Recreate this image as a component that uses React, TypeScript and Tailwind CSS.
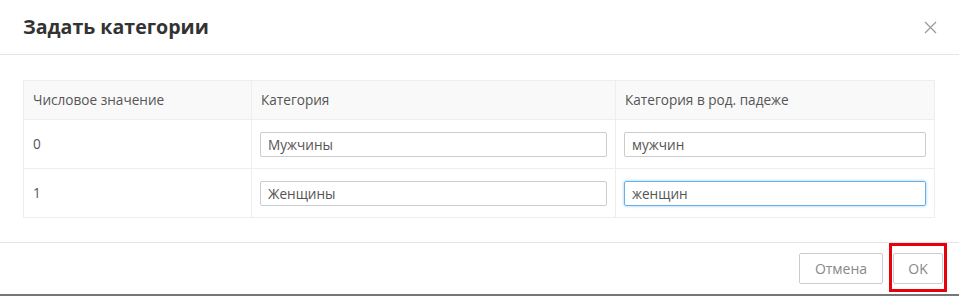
import { useState } from 'react';

const rows = [
  { value: '0', category: 'Мужчины', genitive: 'мужчин' },
  { value: '1', category: 'Женщины', genitive: 'женщин' },
];

function App() {
  const [data, setData] = useState(rows);

  const update = (index: number, key: 'category' | 'genitive', text: string) => {
    setData((prev) => prev.map((row, i) => (i === index ? { ...row, [key]: text } : row)));
  };

  return (
    <div className="h-[296px] w-[959px] overflow-hidden bg-white font-['Open_Sans',sans-serif] text-[#333]">
      <div className="flex h-[294px] flex-col">
        <header className="flex h-[55px] items-center justify-between border-b border-[#e5e5e5] pl-[23px] pr-[22px]">
          <h1 className="text-[19.6px] font-bold leading-none text-[#333]">Задать категории</h1>
          <button className="text-[#999]">
            <svg width="13" height="13" viewBox="0 0 13 13" fill="none" stroke="currentColor" strokeWidth="1.2">
              <path d="M1 1L12 12M12 1L1 12" />
            </svg>
          </button>
        </header>

        <section className="px-[23px] pb-[24px] pt-[25px]">
          <table className="w-[912px] table-fixed border-collapse border border-[#eee] text-[13.6px] text-[#555]">
            <colgroup>
              <col className="w-[228px]" />
              <col className="w-[364px]" />
              <col />
            </colgroup>
            <thead>
              <tr className="h-[39px] bg-[#f9f9f9]">
                <th className="border border-[#eee] px-[9px] text-left font-normal">Числовое значение</th>
                <th className="border border-[#eee] px-[9px] text-left font-normal">Категория</th>
                <th className="border border-[#eee] px-[9px] text-left font-normal">Категория в род. падеже</th>
              </tr>
            </thead>
            <tbody>
              {data.map((row, i) => (
                <tr key={row.value} className="h-[49px]">
                  <td className="border border-[#eee] px-[9px]">{row.value}</td>
                  <td className="border border-[#eee] px-[8px]">
                    <input
                      className="h-[25px] w-full rounded-[2px] border border-[#ccc] px-[7px] text-[13.6px] text-[#555] outline-none"
                      value={row.category}
                      onChange={(e) => update(i, 'category', e.target.value)}
                    />
                  </td>
                  <td className="border border-[#eee] px-[8px]">
                    <input
                      className={`h-[25px] w-full rounded-[2px] border px-[7px] text-[13.6px] text-[#555] outline-none ${
                        i === 1
                          ? 'border-[#66afe9] shadow-[0_0_3px_rgba(102,175,233,0.7)]'
                          : 'border-[#ccc]'
                      }`}
                      value={row.genitive}
                      onChange={(e) => update(i, 'genitive', e.target.value)}
                    />
                  </td>
                </tr>
              ))}
            </tbody>
          </table>
        </section>

        <footer className="flex flex-1 items-start justify-end gap-[10px] border-t border-[#e5e5e5] pr-[16px] pt-[10px]">
          <button className="h-[31px] w-[84px] rounded-[2px] border border-[#ccc] bg-white text-[14px] text-[#888]">
            Отмена
          </button>
          <div className="relative">
            <button className="h-[31px] w-[50px] rounded-[2px] border border-[#ccc] bg-white text-[14px] text-[#888]">
              OK
            </button>
            <div className="pointer-events-none absolute -bottom-[8px] -left-[4px] -right-[4px] -top-[10px] border-[3px] border-[#e8000b]" />
          </div>
        </footer>
      </div>
      <div className="h-[2px] bg-[#777]" />
    </div>
  );
}

export default App;
